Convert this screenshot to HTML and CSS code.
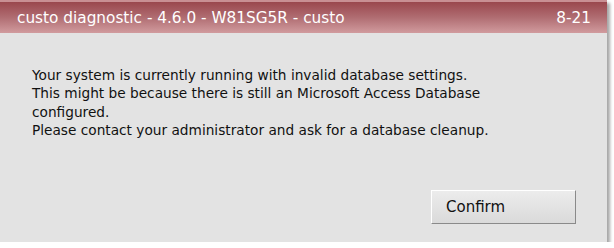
FILE: index.html
```html
<!DOCTYPE html>
<html lang="en">
<head>
  <meta charset="UTF-8">
  <title>custo diagnostic</title>
  <link rel="stylesheet" href="styles.css">
</head>
<body>
  <div class="dialog">
    <div class="title-bar">
      <span class="title">custo diagnostic - 4.6.0 - W81SG5R - custo</span>
      <span class="code">8-21</span>
    </div>
    <div class="content">
      <p class="message">Your system is currently running with invalid database settings.<br>
        This might be because there is still an Microsoft Access Database configured.<br>
        Please contact your administrator and ask for a database cleanup.</p>
      <div class="actions">
        <button class="button">Confirm</button>
      </div>
    </div>
  </div>
</body>
</html>
```
FILE: styles.css
```css
body {
  margin: 0;
  background: #ffffff;
  font-family: "DejaVu Sans", Verdana, sans-serif;
}

.dialog {
  width: 607px;
  height: 242px;
  background: #e3e3e3;
  display: flex;
  flex-direction: column;
  box-shadow: 3px 3px 3px rgba(0, 0, 0, 0.35);
}

.title-bar {
  height: 33px;
  display: flex;
  align-items: center;
  justify-content: space-between;
  padding: 0 16px 0 17px;
  color: #ffffff;
  font-size: 15.3px;
  border-top: 2px solid #c98f93;
  box-sizing: border-box;
  background: linear-gradient(to bottom, #9a474d 0%, #b06d72 50%, #d19b9e 100%);
}

.content {
  flex: 1;
  padding: 33px 31px 0 32px;
  display: flex;
  flex-direction: column;
}

.message {
  margin: 0;
  width: 500px;
  font-size: 13.7px;
  line-height: 18.3px;
  color: #111111;
}

.actions {
  display: flex;
  justify-content: flex-end;
  margin-top: 51px;
}

.button {
  width: 145px;
  height: 34px;
  font-family: inherit;
  font-size: 15px;
  text-align: left;
  padding: 0 0 0 14px;
  color: #111111;
  border: 1px solid;
  border-color: #ffffff #8a8a8a #8a8a8a #ffffff;
  background: linear-gradient(to bottom, #ececec, #dadada);
}
```
